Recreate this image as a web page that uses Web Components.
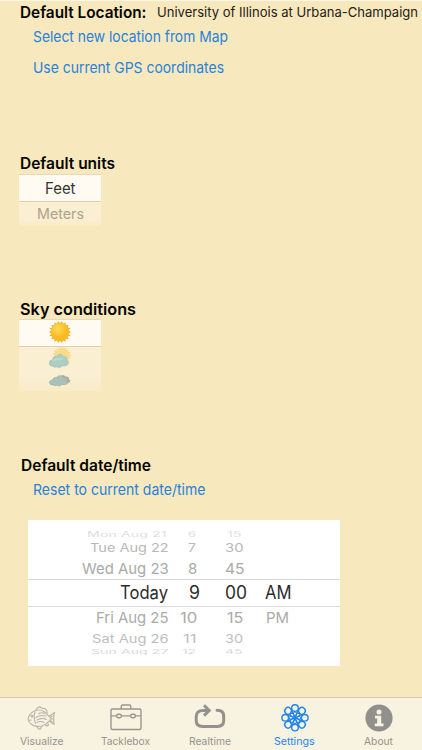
<!DOCTYPE html>
<html lang="en"><head><meta charset="utf-8"><title>Settings</title>
<style>html,body{margin:0;height:100%;overflow:hidden;background:#f8e8bd}</style></head>
<body><settings-page></settings-page>
<script>
// One line of text, fitted to a width w; s = font size, h = line box height, y = vertical scale.
class FitText extends HTMLElement{
  connectedCallback(){
    const r=this.attachShadow({mode:'open'}),a=n=>this.getAttribute(n);
    const w=+a('w'),s=+a('s')||15.5,h=+a('h')||20;
    r.innerHTML=`<style>:host{display:block;width:${w}px;height:${h}px;flex:none}
    span{display:block;width:max-content;white-space:nowrap;font-size:${s}px;line-height:${h}px;transform-origin:0 50%}</style><span><slot></slot></span>`;
    this.fit();
  }
  fit(){
    const p=this.shadowRoot.querySelector('span');
    p.style.transform='none';
    const n=p.getBoundingClientRect().width;
    if(n)p.style.transform=`scale(${+this.getAttribute('w')/n},${this.getAttribute('y')||1})`;
  }
}
class SettingsSection extends HTMLElement{
  connectedCallback(){
    this.attachShadow({mode:'open'}).innerHTML=`<style>:host{display:block;box-sizing:border-box;padding-left:20px}
    .title{display:flex;color:#050505;font-weight:600}</style><div class="title"><slot name="title"></slot></div><slot></slot>`;
  }
}
class OptionPicker extends HTMLElement{
  connectedCallback(){
    this.attachShadow({mode:'open'}).innerHTML=`<style>:host{display:block;width:81.5px;margin-left:-.6px;box-sizing:border-box}
    .on,.off{display:flex;justify-content:center}
    .on{height:26px;background:#fffbf2;border-top:1px solid #e5d9b8;border-bottom:1.5px solid #ddd1b3;color:#333}
    .off{background:linear-gradient(#faefd0,#fbefd3 70%,#f9ebc6);color:#aaa38c;height:var(--rest,24px);flex-direction:column;align-items:center;justify-content:flex-start}
    </style><div class="on"><slot name="selected"></slot></div><div class="off"><slot></slot></div>`;
  }
}
class WeatherIcon extends HTMLElement{
  connectedCallback(){
    const k=this.getAttribute('kind');
    const rays=(x,y,r,n)=>Array.from({length:n},(_,i)=>{const t=i*2*Math.PI/n,c=Math.cos,q=Math.sin;
      return `<path d="M${x+r*c(t-.14)} ${y+r*q(t-.14)}L${x+(r+2.4)*c(t)} ${y+(r+2.4)*q(t)}L${x+r*c(t+.14)} ${y+r*q(t+.14)}Z"/>`}).join('');
    const cloud='<path d="M5 17Q1 17 1 13.5 1 10.5 4.3 10.2 5 6.2 9 6.7 12 2 15.6 6.6 20 6.8 19.5 11 22.2 12 20.3 15.2 18 17.2 14.6 16.3 12.2 19.8 9 17.4 7 18.6 5 17Z"';
    const art={
     sun:`<svg width="24" height="24" viewBox="0 0 24 24"><defs><radialGradient id="g" cx=".38" cy=".32"><stop stop-color="#ffdc55"/><stop offset="1" stop-color="#f9b922"/></radialGradient></defs><g fill="#efaa27">${rays(12,12,8.8,18)}</g><circle cx="12" cy="12" r="9.1" fill="url(#g)" stroke="#f2b02a" stroke-width=".6"/></svg>`,
     partly:`<svg width="24" height="23" viewBox="0 0 24 23"><g fill="#f4d37b">${rays(14,8.5,7,17)}<circle cx="14" cy="8.5" r="7.4" fill="#f9dc88"/></g><g transform="translate(.3 2.8) scale(.96 .98)">${cloud} fill="#adcec4" stroke="#9cc1b8" stroke-width=".6"/><path d="M5 11.5Q9 8 15 9.5" stroke="#bfdacd" stroke-width="2" fill="none"/></g></svg>`,
     cloudy:`<svg width="24" height="16" viewBox="0 0 24 16"><g transform="translate(5 0) scale(.82 .68)">${cloud} fill="#b1aa9f"/></g><g transform="translate(.5 .3) scale(.93 .75)">${cloud} fill="#a9c1b6" stroke="#9bb0a8" stroke-width=".7"/></g></svg>`};
    this.attachShadow({mode:'open'}).innerHTML=`<style>:host{display:block}svg{display:block}</style>${art[k]}`;
  }
}
// Rows of the wheel: height, font size, vertical scale, colour, cells [text, left, right], space above.
const rows=[
 [13,13.5,.52,'#dedede',[['Mon Aug 21',87,166.5],['6',188,196],['15',226.5,241]],0],
 [14,14.5,.78,'#b8b8b8',[['Tue Aug 22',89.5,168.2],['7',188.5,196.5],['30',225,243.5]],0],
 [21,16,.93,'#a9a9a9',[['Wed Aug 23',81.7,168.5],['8',188,197.3],['45',225.5,245]],3],
 [28,18,1,'#2c2c2c',[['Today',120,168],['9',188.5,199.5],['00',224.5,246.5],['AM',265,291.5]],0],
 [21.5,16,.93,'#ababab',[['Fri Aug 25',96,168.5],['10',180,197.3],['15',227.5,243.8],['PM',266.5,289.5]],0],
 [19.5,14.5,.78,'#bdbdbd',[['Sat Aug 26',92,168.7],['11',183,196.5],['30',225.5,243.5]],0],
 [7,13.5,.46,'#dadada',[['Sun Aug 27',90.5,168],['12',182,196],['45',224.5,242]],0]];
class DateWheel extends HTMLElement{
  connectedCallback(){
    this.attachShadow({mode:'open'}).innerHTML=`<style>:host{display:flex;flex-direction:column;width:311.5px;height:146px;background:#fff;padding-top:8px;box-sizing:border-box}
    .r{display:flex;flex:none;box-sizing:border-box}
    .now{box-shadow:inset 0 1px #dcdcdc,inset 0 -1px #dcdcdc}</style>`+rows.map((r,i)=>{let x=28;
      return `<div class="r ${i==3?'now':''}" style="height:${r[0]}px;margin-top:${r[5]}px;color:${r[3]}">`+r[4].map(c=>{const m=c[1]-x;x=c[2];
        return `<fit-text w="${c[2]-c[1]}" s="${r[1]}" h="${r[0]}" y="${r[2]}" style="margin-left:${m}px">${c[0]}</fit-text>`}).join('')+'</div>'}).join('');
  }
}
const petals=Array.from({length:8},(_,i)=>`<g transform="rotate(${i*45} 15 15)"><circle cx="15" cy="4.7" r="3.5"/><path d="M12.2 7 15 15 17.8 7M15 15 13.4 10.4 15 8.3 16.6 10.4Z" stroke-width="1"/></g>`).join('');
const icons={
 fish:`<g fill="none" stroke="#b8b5aa" stroke-width="1.15" stroke-linejoin="round" stroke-linecap="round"><path d="M2 15Q3 10 7.5 7.5 13 4.5 18 7.5 21 9.5 23 12.5L28.6 8.5Q26.8 13.5 28.2 20.5L23 17Q20 20.5 16 22 9 23.5 5 20 2.5 18 2 15Z"/><path d="M9.5 6.5Q11 3.5 14 2.5 14.5 4.5 18.5 4.5 21.5 6 21 9.5M10.5 22.3Q12 25.5 14.5 25 15 23.5 16 22M19 20.5Q21 22.5 22.3 21.5L21.8 18.5M9 8Q7 13 9.5 19.5M10 13.5Q14 10.5 20 12M11 16Q16 13 20.5 15.5M11 18.5Q14.5 16.5 18 18.5M12.5 9.5Q16 8 18.5 9.5M24 13.5 26.2 12M24 14.8H26.8M24 16.2 26.2 18M2.5 16.5 5 16"/><circle cx="6" cy="12.3" r=".9"/></g>`,
 box:`<g fill="none" stroke="#969690" stroke-width="1.35"><rect x="0" y="5" width="30" height="20.5" rx="1.5"/><path d="M10.2 5V2.5Q10.2 1 11.7 1H18.3Q19.8 1 19.8 2.5V5M0 11.9H5.5M10.5 11.9H19.5M24.5 11.9H30"/><rect x="5.6" y="10.2" width="4.8" height="3.5" rx="1.7"/><rect x="19.6" y="10.2" width="4.8" height="3.5" rx="1.7"/></g>`,
 loop:`<g fill="none" stroke="#92918d" stroke-width="3"><path d="M12.5 6.5H8Q1.2 6.5 1.2 12.5V16.5Q1.2 22.4 7.5 22.4H22.5Q28.7 22.4 28.7 16.5V12Q28.7 6.2 22 6.2" stroke-linecap="round"/><path d="M9 1.2 14.2 6.4 9 11.6"/></g>`,
 flower:`<g fill="none" stroke="#2186eb" stroke-width="1.5" stroke-linejoin="round" transform="translate(0 -1.2) translate(15 15) scale(.95) translate(-15 -15)">${petals}</g>`,
 info:`<circle cx="15" cy="14" r="13.6" fill="#91908c"/><circle cx="15" cy="8" r="2.5" fill="#f8f2e1"/><path d="M11 11.8H17.2V19.5H19.5V22.2H10.8V19.5H13.2V14.5H11Z" fill="#f8f2e1"/>`};
class TabItem extends HTMLElement{
  connectedCallback(){
    this.attachShadow({mode:'open'}).innerHTML=`<style>:host{display:flex;flex-direction:column;align-items:center;width:84.4px;flex:none;padding-top:6px;box-sizing:border-box;color:#96948c}
    :host([active]){color:#2085e8}svg{overflow:visible;display:block}</style>
    <svg width="30" height="30" viewBox="0 0 30 30">${icons[this.getAttribute('icon')]}</svg><slot></slot>`;
  }
}
class SettingsPage extends HTMLElement{
  connectedCallback(){
    this.attachShadow({mode:'open'}).innerHTML=`<style>
    :host{display:flex;flex-direction:column;width:422px;height:750px;box-sizing:border-box;background:#f8e8bd;font-family:Inter,"Liberation Sans",sans-serif;border-top:1px solid #fcf6e4}
    .link{color:#2782dc;margin-left:13px}.loc{color:#242118;font-weight:400}
    .s1{height:151.5px}.s2{height:146.5px}.s3{height:155px}.s4{height:243px}
    nav{height:53px;box-sizing:border-box;display:flex;background:#f8f2e1;border-top:1px solid #d9cfae;padding-bottom:1px}
    nav tab-item:first-child{margin-left:-.8px}
    </style>
    <settings-section class="s1"><fit-text slot="title" w="126.5" s="16" h="22">Default Location:</fit-text><fit-text slot="title" class="loc" w="261" s="13.3" h="23" style="margin-left:10.5px">University of Illinois at Urbana-Champaign</fit-text>
      <fit-text class="link" w="195" s="15" h="25">Select new location from Map</fit-text><fit-text class="link" w="191" s="15" h="37">Use current GPS coordinates</fit-text></settings-section>
    <settings-section class="s2"><fit-text slot="title" w="95" s="16" h="21">Default units</fit-text>
      <option-picker><fit-text slot="selected" w="30.5" s="15.5" h="27">Feet</fit-text><fit-text w="47" s="14.6" h="25">Meters</fit-text></option-picker></settings-section>
    <settings-section class="s3"><fit-text slot="title" w="116" s="16.3" h="20">Sky conditions</fit-text>
      <option-picker style="--rest:44px"><weather-icon slot="selected" kind="sun"></weather-icon><weather-icon kind="partly"></weather-icon><weather-icon kind="cloudy" style="margin-top:2px"></weather-icon></option-picker></settings-section>
    <settings-section class="s4"><fit-text slot="title" w="130" s="16" h="22" style="margin-left:1px">Default date/time</fit-text>
      <fit-text class="link" w="172.5" s="15" h="28">Reset to current date/time</fit-text><date-wheel style="margin:16px 0 0 8px"></date-wheel></settings-section>
    <nav><tab-item icon="fish"><fit-text w="43.5" s="10.7" h="15">Visualize</fit-text></tab-item><tab-item icon="box"><fit-text w="49" s="10.7" h="15">Tacklebox</fit-text></tab-item><tab-item icon="loop"><fit-text w="42" s="10.7" h="15">Realtime</fit-text></tab-item><tab-item icon="flower" active><fit-text w="40.5" s="10.7" h="15">Settings</fit-text></tab-item><tab-item icon="info"><fit-text w="29" s="10.7" h="15">About</fit-text></tab-item></nav>`;
  }
}
customElements.define('fit-text',FitText);
customElements.define('weather-icon',WeatherIcon);
customElements.define('option-picker',OptionPicker);
customElements.define('settings-section',SettingsSection);
customElements.define('date-wheel',DateWheel);
customElements.define('tab-item',TabItem);
customElements.define('settings-page',SettingsPage);
// Children connect before their parents render their slots, so widths are settled once the tree is complete.
function refit(root){root.querySelectorAll('*').forEach(e=>{if(e.fit)e.fit();if(e.shadowRoot)refit(e.shadowRoot)})}
refit(document);
</script></body></html>
